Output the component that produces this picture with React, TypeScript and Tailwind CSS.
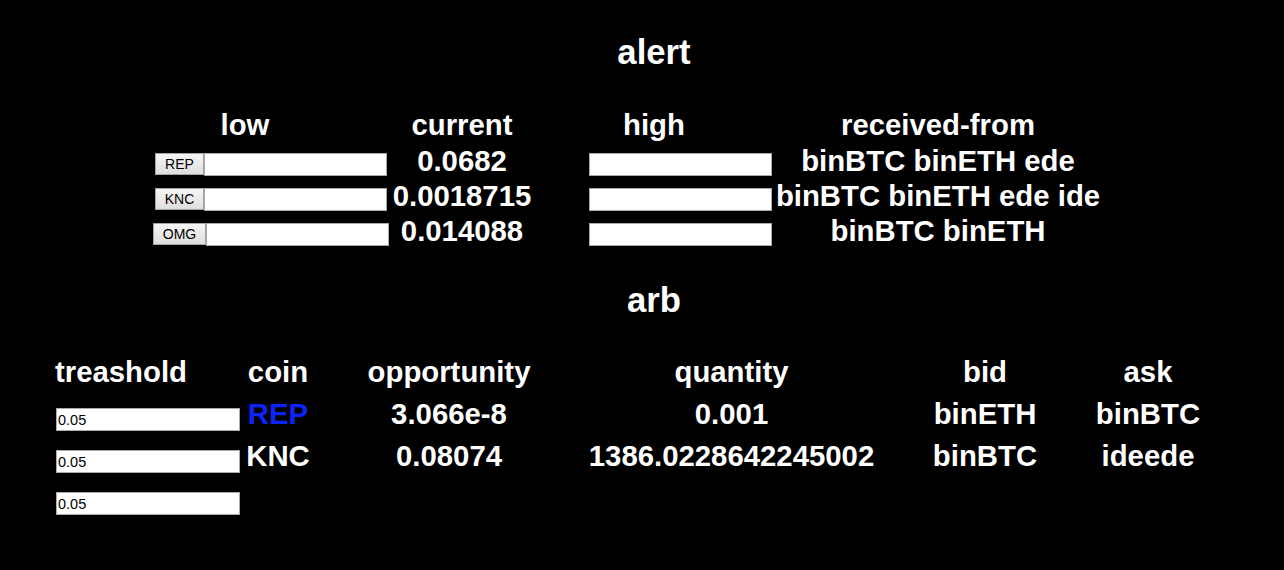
import React from 'react';

const alertRows = [
  { coin: 'REP', current: '0.0682', from: 'binBTC binETH ede' },
  { coin: 'KNC', current: '0.0018715', from: 'binBTC binETH ede ide' },
  { coin: 'OMG', current: '0.014088', from: 'binBTC binETH' },
];

const arbRows = [
  { coin: 'REP', opportunity: '3.066e-8', quantity: '0.001', bid: 'binETH', ask: 'binBTC', hot: true },
  { coin: 'KNC', opportunity: '0.08074', quantity: '1386.0228642245002', bid: 'binBTC', ask: 'ideede', hot: false },
  { coin: '', opportunity: '', quantity: '', bid: '', ask: '', hot: false },
];

const TextBox = ({ value, width }: { value?: string; width: string }) => (
  <input
    type="text"
    defaultValue={value}
    className={`${width} h-[23px] border border-[#a9a9a9] bg-white px-[1px] text-[14.5px] font-normal leading-[21px] text-black outline-none font-['Liberation_Sans',sans-serif]`}
  />
);

const CoinButton = ({ label }: { label: string }) => (
  <button className="h-[22px] border border-[#a3a3a3] bg-gradient-to-b from-[#f6f6f6] to-[#dedede] px-[9px] text-[14px] font-normal leading-[20px] text-black font-['Liberation_Sans',sans-serif]">
    {label}
  </button>
);

export default function App() {
  return (
    <div className="min-h-screen bg-black pt-[32px] font-bold text-white font-['Liberation_Sans',Arial,sans-serif]">
      <h1 className="h-[40px] pl-[24px] text-center text-[34.7px] leading-[40px]">alert</h1>

      <div className="ml-[102px] mt-[36px] grid grid-cols-[286px_148px_236px_332px] text-[29.33px]">
        {['low', 'current', 'high', 'received-from'].map((h) => (
          <div key={h} className="h-[36px] text-center leading-[34px]">
            {h}
          </div>
        ))}
        {alertRows.map((row) => (
          <React.Fragment key={row.coin}>
            <div className="flex h-[35px] items-start justify-center pl-[52px] pt-[9px]">
              <CoinButton label={row.coin} />
              <TextBox width="w-[183px]" />
            </div>
            <div className="h-[35px] whitespace-nowrap text-center leading-[34px]">{row.current}</div>
            <div className="flex h-[35px] items-start justify-end pt-[9px]">
              <TextBox width="w-[183px]" />
            </div>
            <div className="h-[35px] whitespace-nowrap text-center leading-[34px]">{row.from}</div>
          </React.Fragment>
        ))}
      </div>

      <h1 className="mt-[31px] h-[40px] pl-[24px] text-center text-[34.7px] leading-[40px]">arb</h1>

      <div className="ml-[54px] mt-[35px] grid grid-cols-[190px_68px_274px_291px_216px_110px] text-[29.33px]">
        <div className="h-[42px] pl-[1px] leading-[34px]">treashold</div>
        {['coin', 'opportunity', 'quantity', 'bid', 'ask'].map((h) => (
          <div key={h} className="h-[42px] text-center leading-[34px]">
            {h}
          </div>
        ))}
        {arbRows.map((row, i) => (
          <React.Fragment key={i}>
            <div className="flex h-[42px] items-start pl-[2px] pt-[11px]">
              <TextBox value="0.05" width="w-[184px]" />
            </div>
            <div className={`h-[42px] whitespace-nowrap text-center leading-[34px] ${row.hot ? 'text-[#0b24fb]' : ''}`}>
              {row.coin}
            </div>
            <div className="h-[42px] whitespace-nowrap text-center leading-[34px]">{row.opportunity}</div>
            <div className="h-[42px] whitespace-nowrap text-center leading-[34px]">{row.quantity}</div>
            <div className="h-[42px] whitespace-nowrap text-center leading-[34px]">{row.bid}</div>
            <div className="h-[42px] whitespace-nowrap text-center leading-[34px]">{row.ask}</div>
          </React.Fragment>
        ))}
      </div>
    </div>
  );
}
